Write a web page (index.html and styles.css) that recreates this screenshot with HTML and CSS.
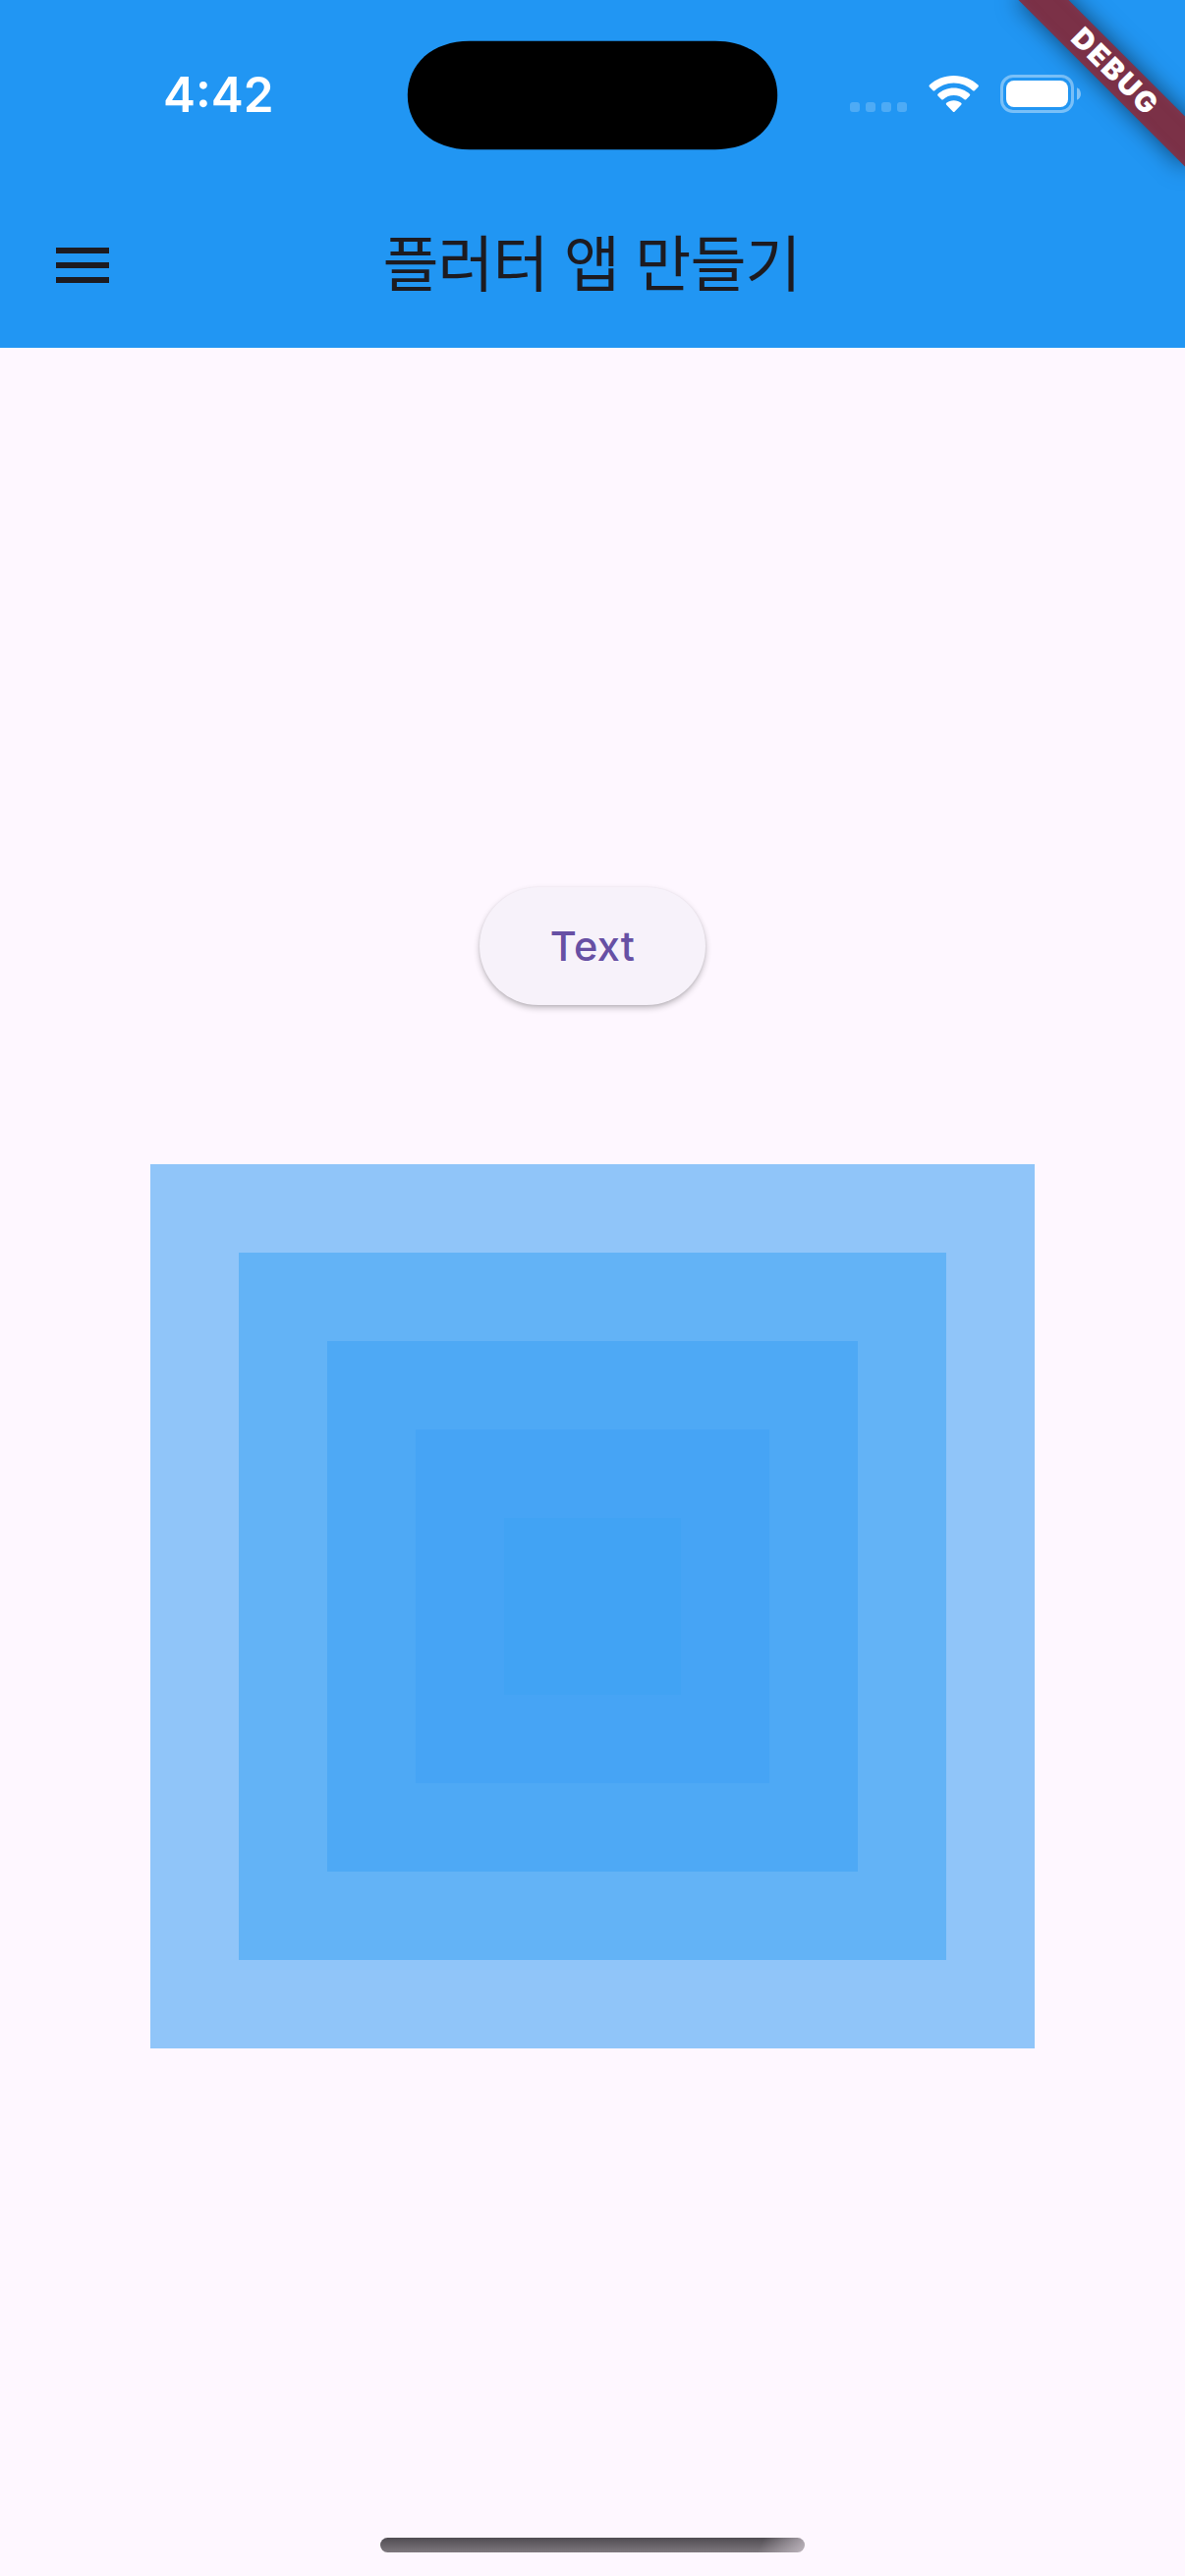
FILE: index.html
```html
<!DOCTYPE html>
<html lang="ko">
<head>
<meta charset="utf-8">
<title>플러터 앱 만들기</title>
<link rel="stylesheet" href="styles.css">
</head>
<body>
<div class="screen">
  <header class="header">
    <div class="status">
      <div class="time">4:42</div>
      <svg class="island" width="378" height="112" viewBox="0 0 378 112"><path d="M64 .8H314C352 .8 377.200 24 377.200 56C377.200 88 352 111.200 314 111.200H64C26 111.200 .8 88 .8 56C.8 24 26 .8 64 .8Z"/></svg>
      <svg class="indicators" width="236" height="40" viewBox="865 76 236 40" fill="#fff">
        <g opacity=".2"><rect x="865" y="104" width="10" height="10" rx="3"/><rect x="881" y="104" width="10" height="10" rx="3"/><rect x="897" y="104" width="10" height="10" rx="3"/><rect x="913" y="104" width="10" height="10" rx="3"/></g>
        <path d="M970.700 77C961 77 952.200 80.600 945.900 86.600Q945 87.500 945.900 88.500L949.600 92.200Q950.400 93 951.300 92.200C956.500 87.300 963.300 84.400 970.700 84.400S984.900 87.300 990.100 92.200Q991 93 991.800 92.200L995.500 88.500Q996.400 87.500 995.500 86.600C989.200 80.600 980.400 77 970.700 77Z"/>
        <path d="M970.700 89.500C964.400 89.500 958.700 91.900 954.500 95.700Q953.600 96.600 954.500 97.500L958.200 101.200Q959 102 959.900 101.200C962.800 98.600 966.500 97 970.700 97S978.600 98.600 981.500 101.200Q982.400 102 983.200 101.200L986.900 97.500Q987.800 96.600 986.900 95.700C982.700 91.900 977 89.500 970.700 89.500Z"/>
        <path d="M970.700 102.200C967.800 102.200 965.200 103.200 963.200 104.800Q962.200 105.700 963.200 106.700L969.700 113.400Q970.700 114.400 971.700 113.400L978.200 106.700Q979.200 105.700 978.200 104.800C976.200 103.200 973.600 102.200 970.700 102.200Z"/>
        <rect x="1019.500" y="77.500" width="72" height="36" rx="11.500" fill="none" stroke="#fff" stroke-width="3" opacity=".4"/>
        <rect x="1024" y="82" width="63" height="27" rx="8"/>
        <path d="M1096 89.200C1101.300 91.500 1101.300 99.500 1096 101.800Z" opacity=".45"/>
      </svg>
    </div>
    <div class="appbar">
      <svg class="menu" width="54" height="36" viewBox="0 0 54 36"><path d="M0 0H54V6H0ZM0 15H54V21H0ZM0 30H54V36H0Z"/></svg>
      <h1 class="title">플러터 앱 만들기</h1>
    </div>
  </header>
  <main class="body">
    <button class="button">Text</button>
    <div class="square s1"><div class="square s2"><div class="square s3"><div class="square s4"><div class="square s5"></div></div></div></div></div>
  </main>
  <div class="home"></div>
  <div class="banner">DEBUG</div>
</div>
</body>
</html>
```
FILE: styles.css
```css
* { box-sizing: border-box; }
body { margin: 0; background: #fef7ff; }
.screen {
  position: relative;
  width: 1206px;
  height: 2622px;
  overflow: hidden;
  display: flex;
  flex-direction: column;
  align-items: center;
  background: #fef7ff;
  font-family: Inter, "Noto Sans CJK KR", sans-serif;
}
.header { width: 100%; height: 354px; background: #2196f3; }
.status {
  height: 186px;
  display: grid;
  grid-template-columns: 414px 378px 1fr;
  align-items: start;
}
.time {
  padding: 66px 0 0 166px;
  color: #fff;
  font-size: 49.5px;
  font-weight: 580;
  line-height: 60px;
}
.island { display: block; margin-top: 41px; }
.indicators { display: block; margin: 76px 0 0 73px; }
.appbar {
  height: 168px;
  display: grid;
  grid-template-columns: 57px 54px 1fr 111px;
  align-items: center;
}
.menu { grid-column: 2; fill: #1d1b20; }
.title {
  margin: 0;
  padding: 0 2px 10px 0;
  color: #1d1b20;
  font-family: "Noto Sans CJK KR", sans-serif;
  font-size: 62px;
  font-weight: 400;
  letter-spacing: -1px;
  line-height: 84px;
  text-align: center;
}
.body {
  flex: 1;
  display: flex;
  flex-direction: column;
  align-items: center;
  padding-top: 549px;
}
.button {
  width: 230px;
  height: 120px;
  margin: 0 0 162px;
  padding: 0;
  border: 0;
  border-radius: 60px;
  background: #f7f2fa;
  box-shadow: 0 3px 6px rgba(0, 0, 0, .24), 0 1px 3px rgba(0, 0, 0, .08);
  color: #6750a4;
  font: 450 41.5px/60px Inter, sans-serif;
  letter-spacing: .3px;
}
.square { padding: 90px; }
.s1 { width: 900px; height: 900px; background: #90c5f9; }
.s2 { height: 720px; background: #63b3f6; }
.s3 { height: 540px; background: #4ea9f5; }
.s4 { height: 360px; background: #46a4f5; }
.s5 { height: 180px; background: #41a3f4; }
.home {
  width: 432px;
  height: 15px;
  margin-bottom: 24px;
  border-radius: 7.5px;
  background:
    linear-gradient(115deg, transparent 89%, rgba(205, 196, 205, .8) 100%),
    linear-gradient(#504c52, #7e787e);
}
.banner {
  position: absolute;
  left: 1014px;
  top: 54px;
  width: 240px;
  height: 36px;
  padding-left: 3px;
  transform: rotate(45deg);
  background: #7b3147;
  box-shadow: 0 0 24px rgba(0, 0, 0, .55), inset 0 0 9px rgba(130, 65, 95, .5);
  color: #fff;
  font-size: 29px;
  font-weight: 900;
  letter-spacing: 2.2px;
  line-height: 36px;
  text-align: center;
}
```
